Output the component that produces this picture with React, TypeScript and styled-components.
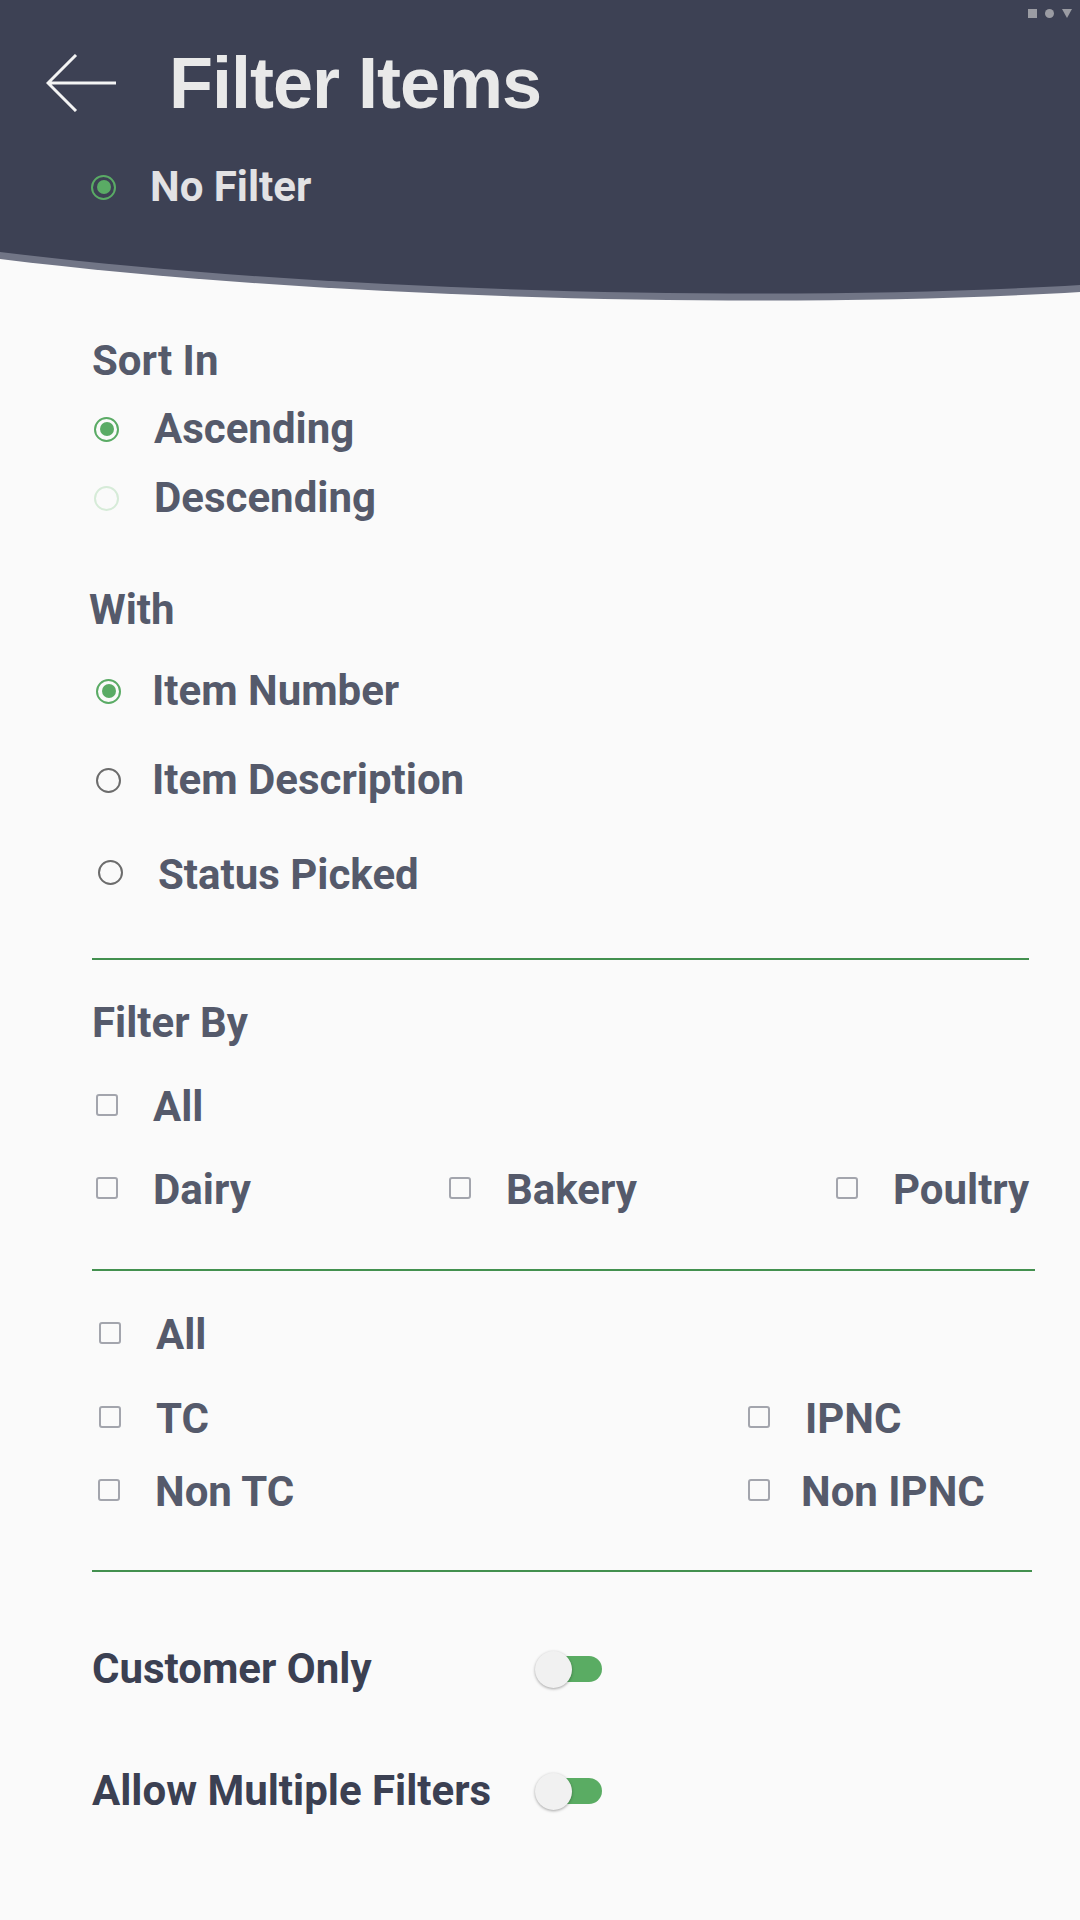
import styled, { createGlobalStyle } from 'styled-components';

const GlobalStyle = createGlobalStyle`
	* {
		box-sizing: border-box;
	}

	body {
		margin: 0;
		background: #fafafa;
		font-family: Roboto, 'Liberation Sans', sans-serif;
	}
`;

type RadioState = 'on' | 'off' | 'faint';

const radioColor: Record<RadioState, string> = {
	on: '#5aab65',
	off: '#6c6c6c',
	faint: '#d6ebd8',
};

function FilterItems() {
	return (
		<Page>
			<GlobalStyle />
			<Header>
				<StatusIcons>
					<StatusSquare />
					<StatusCircle />
					<StatusTriangle />
				</StatusIcons>

				<TitleRow>
					<BackArrow width="72" height="58" viewBox="0 0 72 58">
						<path d="M30 1 L2 29 L30 57 M2 29 H70" fill="none" stroke="#f4f4f4" strokeWidth="3" />
					</BackArrow>
					<Title>Filter Items</Title>
				</TitleRow>

				<NoFilterRow>
					<Radio $state="on" />
					<NoFilterText>No Filter</NoFilterText>
				</NoFilterRow>
			</Header>

			{/* 헤더 하단 곡선 */}
			<Wave width="1080" height="55" viewBox="0 0 1080 55" preserveAspectRatio="none">
				<path d="M0 0 H1080 V42 C800 59, 350 52, 0 9 Z" fill="#717586" />
				<path d="M0 0 H1080 V35 C800 52, 350 45, 0 2 Z" fill="#3d4154" />
			</Wave>

			<Content>
				<SectionTitle $mt={26}>Sort In</SectionTitle>
				<OptionRow $mt={8}>
					<Radio $state="on" />
					<OptionText $gap={-1}>Ascending</OptionText>
				</OptionRow>
				<OptionRow $mt={9}>
					<Radio $state="faint" />
					<OptionText $gap={-1}>Descending</OptionText>
				</OptionRow>

				<SectionTitle $mt={52} $shift={-3}>With</SectionTitle>
				<OptionRow $mt={21} $shift={2}>
					<Radio $state="on" />
					<OptionText $gap={-5}>Item Number</OptionText>
				</OptionRow>
				<OptionRow $mt={29} $shift={2}>
					<Radio $state="off" />
					<OptionText $gap={-5}>Item Description</OptionText>
				</OptionRow>
				<OptionRow $mt={32} $shift={4}>
					<Radio $state="off" />
					<OptionText $gap={-1} $drop={6}>Status Picked</OptionText>
				</OptionRow>

				<Divider $mt={56} />

				<SectionTitle $mt={33}>Filter By</SectionTitle>
				<OptionRow $mt={22}>
					<Checkbox />
					<OptionText $gap={-1} $drop={4}>All</OptionText>
				</OptionRow>
				<ThreeColumns $mt={23}>
					<OptionRow>
						<Checkbox />
						<OptionText $gap={-1} $drop={4}>Dairy</OptionText>
					</OptionRow>
					<OptionRow>
						<Checkbox />
						<OptionText $gap={-1} $drop={4}>Bakery</OptionText>
					</OptionRow>
					<OptionRow>
						<Checkbox />
						<OptionText $gap={-1} $drop={4}>Poultry</OptionText>
					</OptionRow>
				</ThreeColumns>

				<Divider $mt={51} $extend={6} />

				<OptionRow $mt={32} $shift={3}>
					<Checkbox />
					<OptionText $gap={-1} $drop={4}>All</OptionText>
				</OptionRow>
				<TwoColumns $mt={24}>
					<OptionRow $shift={3}>
						<Checkbox />
						<OptionText $gap={-1} $drop={4}>TC</OptionText>
					</OptionRow>
					<OptionRow>
						<Checkbox />
						<OptionText $gap={-1} $drop={4}>IPNC</OptionText>
					</OptionRow>
				</TwoColumns>
				<TwoColumns $mt={13}>
					<OptionRow $shift={2}>
						<Checkbox />
						<OptionText $gap={-1} $drop={4}>Non TC</OptionText>
					</OptionRow>
					<OptionRow>
						<Checkbox />
						<OptionText $gap={-5} $drop={4}>Non IPNC</OptionText>
					</OptionRow>
				</TwoColumns>

				<Divider $mt={50} $extend={3} />

				<ToggleRow $mt={67}>
					<ToggleLabel>Customer Only</ToggleLabel>
					<Toggle>
						<ToggleThumb />
					</Toggle>
				</ToggleRow>
				<ToggleRow $mt={62}>
					<ToggleLabel>Allow Multiple Filters</ToggleLabel>
					<Toggle>
						<ToggleThumb />
					</Toggle>
				</ToggleRow>
			</Content>
		</Page>
	);
}

const Page = styled.div`
	width: 1080px;
	min-height: 1920px;
	overflow: hidden;

	background: #fafafa;
`;

const Header = styled.header`
	position: relative;
	height: 250px;
	padding: 52px 0 0 46px;

	background: #3d4154;
`;

const StatusIcons = styled.div`
	position: absolute;
	top: 9px;
	right: 8px;
	display: flex;
	gap: 8px;
	align-items: center;
`;

const StatusSquare = styled.span`
	width: 9px;
	height: 9px;

	background: #9b9ca3;
`;

const StatusCircle = styled.span`
	width: 9px;
	height: 9px;
	border-radius: 50%;

	background: #9b9ca3;
`;

const StatusTriangle = styled.span`
	width: 0;
	height: 0;
	border-top: 9px solid #9b9ca3;
	border-right: 5px solid transparent;
	border-left: 5px solid transparent;
`;

const TitleRow = styled.div`
	display: flex;
	gap: 51px;
	align-items: center;
	height: 62px;
`;

const BackArrow = styled.svg`
	display: block;
	flex-shrink: 0;
`;

const Title = styled.h1`
	margin: 0;

	font-family: 'Liberation Sans', Arial, sans-serif;
	font-size: 72px;
	font-weight: 700;
	line-height: 62px;
	letter-spacing: -1px;
	color: #e9e9e9;
`;

const NoFilterRow = styled.div`
	display: flex;
	gap: 34px;
	align-items: center;
	height: 50px;
	margin-top: 48px;
	padding-left: 43px;
`;

const NoFilterText = styled.span`
	font-size: 42px;
	font-weight: 700;
	line-height: 50px;
	color: #e2e2e4;
`;

const Wave = styled.svg`
	display: block;
`;

const Content = styled.main`
	padding: 0 51px 0 92px;
`;

interface SpacingProps {
	$mt?: number;
	$shift?: number;
}

const SectionTitle = styled.h2<SpacingProps>`
	height: 60px;
	margin: ${({ $mt = 0 }) => $mt}px 0 0 ${({ $shift = 0 }) => $shift}px;

	font-size: 42px;
	font-weight: 700;
	line-height: 60px;
	color: #555a6b;
`;

const OptionRow = styled.div<SpacingProps>`
	display: flex;
	align-items: center;
	height: 60px;
	margin-top: ${({ $mt = 0 }) => $mt}px;
	padding-left: ${({ $shift = 0 }) => $shift}px;
`;

const OptionText = styled.span<{ $gap?: number; $drop?: number }>`
	margin-left: ${({ $gap = 0 }) => 36 + $gap}px;
	padding-top: ${({ $drop = 0 }) => $drop}px;

	font-size: 42px;
	font-weight: 700;
	line-height: 60px;
	white-space: nowrap;
	color: #555a6b;
`;

const Radio = styled.span<{ $state: RadioState }>`
	position: relative;
	flex-shrink: 0;
	width: 25px;
	height: 25px;
	margin-left: 2px;
	border: 2.5px solid ${({ $state }) => radioColor[$state]};
	border-radius: 50%;

	&::after {
		content: '';
		position: absolute;
		inset: 3.5px;
		border-radius: 50%;

		background: ${({ $state }) => ($state === 'on' ? radioColor.on : 'transparent')};
	}
`;

const Checkbox = styled.span`
	flex-shrink: 0;
	width: 22px;
	height: 22px;
	margin-left: 4px;
	border: 2.5px solid #a3a5ad;
	border-radius: 3px;
`;

const ThreeColumns = styled.div<SpacingProps>`
	display: grid;
	grid-template-columns: 353px 387px auto;
	margin-top: ${({ $mt = 0 }) => $mt}px;
`;

const TwoColumns = styled.div<SpacingProps>`
	display: grid;
	grid-template-columns: 652px auto;
	margin-top: ${({ $mt = 0 }) => $mt}px;
`;

const Divider = styled.hr<{ $mt: number; $extend?: number }>`
	height: 2px;
	margin: ${({ $mt }) => $mt}px ${({ $extend = 0 }) => -$extend}px 0 0;
	border: none;

	background: #43904f;
`;

const ToggleRow = styled.div<SpacingProps>`
	display: grid;
	grid-template-columns: 443px auto;
	align-items: center;
	height: 60px;
	margin-top: ${({ $mt = 0 }) => $mt}px;
`;

const ToggleLabel = styled.span`
	font-size: 42px;
	font-weight: 700;
	line-height: 60px;
	white-space: nowrap;
	color: #3b4052;
`;

const Toggle = styled.span`
	position: relative;
	display: block;
	width: 67px;
	height: 37px;

	&::before {
		content: '';
		position: absolute;
		top: 5px;
		left: 5px;
		width: 62px;
		height: 26px;
		border-radius: 13px;

		background: #5aac63;
	}
`;

const ToggleThumb = styled.span`
	position: absolute;
	top: 0;
	left: 0;
	width: 37px;
	height: 37px;
	border-radius: 50%;

	background: #f1f1f1;
	box-shadow: 0 1px 3px rgba(0, 0, 0, 0.35);
`;

export default FilterItems;
